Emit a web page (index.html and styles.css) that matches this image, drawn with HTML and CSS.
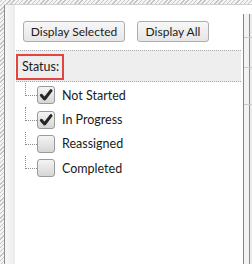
FILE: index.html
```html
<!DOCTYPE html>
<html lang="en">
<head>
    <meta charset="UTF-8">
    <title>Status filter</title>
    <link rel="stylesheet" href="styles.css">
</head>
<body>

<div class="window">
    <div class="frame">
        <div class="gutter"></div>
        <div class="content">
            <div class="toolbar">
                <button class="btn btn-selected">Display Selected</button>
                <button class="btn btn-all">Display All</button>
            </div>

            <div class="group-header">
                <span class="group-label">Status:</span>
            </div>

            <ul class="tree">
                <li class="tree-item">
                    <span class="check checked">
                        <svg width="16" height="16" viewBox="0 0 16 16"><path d="M3.3 8.3 L6.6 12 L13 3.6" fill="none" stroke="#262626" stroke-width="3" stroke-linecap="round" stroke-linejoin="round"/></svg>
                    </span>
                    <span class="label">Not Started</span>
                </li>
                <li class="tree-item">
                    <span class="check checked">
                        <svg width="16" height="16" viewBox="0 0 16 16"><path d="M3.3 8.3 L6.6 12 L13 3.6" fill="none" stroke="#262626" stroke-width="3" stroke-linecap="round" stroke-linejoin="round"/></svg>
                    </span>
                    <span class="label">In Progress</span>
                </li>
                <li class="tree-item">
                    <span class="check"></span>
                    <span class="label">Reassigned</span>
                </li>
                <li class="tree-item">
                    <span class="check"></span>
                    <span class="label">Completed</span>
                </li>
            </ul>
        </div>
    </div>

    <div class="side-panel">
        <div class="side-row row-1"></div>
        <div class="side-row row-2"></div>
        <div class="side-row row-3"></div>
    </div>
</div>

</body>
</html>
```

FILE: styles.css
```css
body {
    margin: 0;
    padding: 0;
    width: 252px;
    height: 264px;
    overflow: hidden;
    font-family: Lato, "Open Sans", sans-serif;
    background: repeating-linear-gradient(-45deg, #c4c4c4 0 1px, #f4f4f4 1px 3px);
}

.window {
    margin: 4px 0 0 4px;
    height: 260px;
    display: flex;
    background-color: #ffffff;
    border-top: 1px solid #cfcfcf;
    box-sizing: border-box;
}

.frame {
    width: 240px;
    display: flex;
    border-left: 1px solid #8e8e8e;
    box-sizing: border-box;
}

.gutter {
    width: 10px;
    background: linear-gradient(to right, #f8f8f8, #ececec);
}

.content {
    flex: 1;
    padding-top: 16px;
}

.toolbar {
    display: flex;
    gap: 12px;
    padding-left: 8px;
}

.btn {
    height: 21px;
    padding: 0;
    font-family: Lato, "Open Sans", sans-serif;
    font-size: 12px;
    color: #1b1b1b;
    border: 1px solid #adadad;
    border-radius: 3px;
    background: linear-gradient(#f7f7f7, #e6e6e6);
}

.btn-selected {
    width: 102px;
}

.btn-all {
    width: 72px;
}

.group-header {
    margin: 8px 2px 0 1px;
    height: 32px;
    box-sizing: border-box;
    background-color: #eeeeee;
    border-top: 1px dotted #a8a8a8;
    border-bottom: 1px dotted #a8a8a8;
    padding-top: 3px;
}

.group-label {
    display: inline-block;
    width: 48px;
    height: 26px;
    box-sizing: border-box;
    border: 2px solid #e2453f;
    padding-left: 4px;
    font-size: 12.5px;
    line-height: 21px;
    color: #1b1b1b;
}

.tree {
    list-style: none;
    margin: 0;
    padding: 1px 0 0 22px;
}

.tree-item {
    position: relative;
    display: flex;
    align-items: center;
    height: 24.4px;
}

.tree-item::before {
    content: "";
    position: absolute;
    left: -12px;
    top: 0;
    width: 11px;
    height: 50%;
    border-left: 1px dotted #8a8a8a;
    border-bottom: 1px dotted #8a8a8a;
}

.check {
    width: 18px;
    height: 18px;
    box-sizing: border-box;
    border: 1px solid #9a9a9a;
    border-radius: 3px;
    background: linear-gradient(#f4f4f4, #d6d6d6);
    display: flex;
    align-items: center;
    justify-content: center;
}

.label {
    margin-left: 7px;
    font-size: 12.5px;
    color: #1b1b1b;
}

.side-panel {
    width: 8px;
    margin-top: 9px;
    border-left: 1px solid #858585;
    background: linear-gradient(to right, #f3f3f3 0 5px, #8c8c8c 5px 6px, #ececec 6px);
}

.side-row {
    border-bottom: 1px solid #cccccc;
}

.row-1 {
    height: 23px;
}

.row-2 {
    height: 29px;
}

.row-3 {
    height: 36px;
}
```
